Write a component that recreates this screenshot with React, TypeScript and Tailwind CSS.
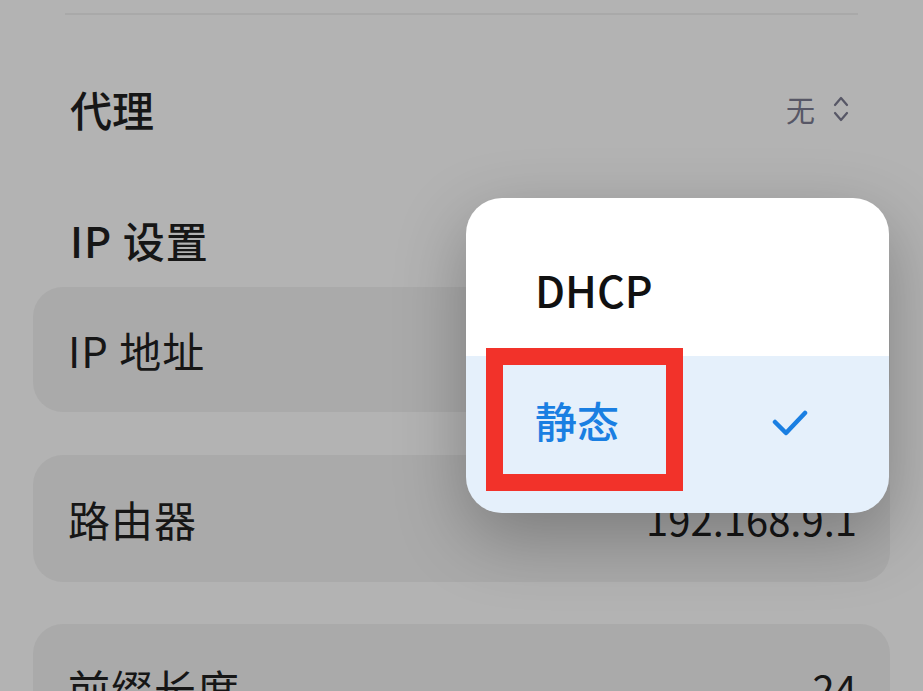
import React from "react";

const font = { fontFamily: '"Noto Sans CJK SC", "Noto Sans", sans-serif' };

const rows = [
  { label: "IP 地址", value: "", h: "h-[125px]", mt: "mt-[23px]" },
  { label: "路由器", value: "192.168.9.1", h: "h-[127px]", mt: "mt-[43px]" },
  { label: "前缀长度", value: "24", h: "h-[127px]", mt: "mt-[42px]" },
];

export default function App() {
  return (
    <div
      className="relative h-[691px] w-[923px] overflow-hidden bg-[#b3b3b3] text-[#161616]"
      style={font}
    >
      {/* Divider */}
      <div className="mx-[65px] mt-[13px] h-[2px] bg-[#a9a9a9]" />

      {/* Proxy row */}
      <div className="ml-[70px] mr-[74px] mt-[70px] flex h-[48px] items-center justify-between">
        <span className="text-[42px] font-medium leading-none">代理</span>
        <div className="flex items-center gap-[18px] text-[#575766]">
          <span className="text-[29px] leading-none">无</span>
          <svg width="16" height="28" viewBox="0 0 16 28" fill="none" stroke="currentColor" strokeWidth="2.2" strokeLinecap="round" strokeLinejoin="round">
            <path d="M2 10 L8 3 L14 10" />
            <path d="M2 18 L8 25 L14 18" />
          </svg>
        </div>
      </div>

      {/* IP settings header */}
      <div className="ml-[70px] mt-[83px] flex h-[48px] items-center">
        <span className="text-[42px] font-medium leading-none tracking-[1px]">IP 设置</span>
      </div>

      {/* Cards */}
      {rows.map((r) => (
        <div
          key={r.label}
          className={`mx-[33px] ${r.mt} ${r.h} flex items-center justify-between rounded-[30px] bg-[#aaaaaa] pl-[35px] pr-[33px]`}
        >
          <span className="text-[42px] leading-none tracking-[1px]">{r.label}</span>
          <span className="text-[40px] leading-none">{r.value}</span>
        </div>
      ))}

      {/* Dropdown menu */}
      <div className="absolute left-[466px] top-[198px] w-[423px] overflow-hidden rounded-[36px] shadow-[0_24px_70px_rgba(0,0,0,0.28)]">
        <div className="flex h-[158px] items-center bg-white pl-[69px] pt-[24px]">
          <span className="text-[43px] font-medium leading-none text-[#111]">DHCP</span>
        </div>
        <div className="flex h-[157px] items-center justify-between bg-[#e5f0fb] pb-[30px] pl-[69px] pr-[81px]">
          <span className="text-[42px] font-medium leading-none text-[#1a7fe2]">静态</span>
          <svg className="mt-[6px]" width="36" height="28" viewBox="0 0 36 28" fill="none" stroke="#1a7fe2" strokeWidth="4.5" strokeLinecap="round" strokeLinejoin="round">
            <path d="M3 13 L14 24 L33 4" />
          </svg>
        </div>
      </div>

      {/* Annotation box */}
      <div className="absolute left-[486px] top-[348px] h-[143px] w-[197px] border-[17px] border-[#f2322a]" />
    </div>
  );
}
